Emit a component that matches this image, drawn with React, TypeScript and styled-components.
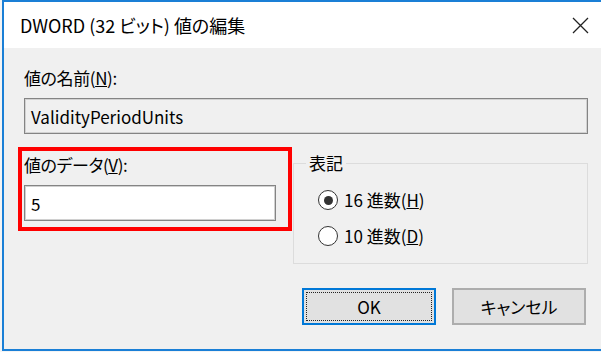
import React from "react";
import styled, { createGlobalStyle } from "styled-components";

const GlobalStyle = createGlobalStyle`
  html, body { margin: 0; padding: 0; background: #f4f4f4; }
  body {
    font-family: "Noto Sans CJK JP", "Noto Sans", sans-serif;
    font-feature-settings: "palt";
    color: #000;
  }
  * { box-sizing: border-box; }
`;

const Frame = styled.div`
  width: 599px;
  height: 351px;
  margin-left: 2px;
  border: 0 solid #1a7fd6;
  border-top-width: 2px;
  border-left-width: 2px;
  border-bottom-width: 2px;
  display: flex;
  flex-direction: column;
  overflow: hidden;
`;

const TitleBar = styled.div`
  flex: none;
  height: 46px;
  background: #fff;
  display: flex;
  align-items: center;
  padding: 0 12px 0 16px;
`;

const Title = styled.div`
  flex: 1;
  font-size: 18px;
  line-height: 26px;
`;

const CloseIcon = styled.svg`
  width: 17px;
  height: 17px;
  display: block;
`;

const Body = styled.div`
  flex: 1;
  background: #f0f0f0;
  padding: 18px 13px 0 20px;
  display: flex;
  flex-direction: column;
`;

const Label = styled.div`
  font-size: 17px;
  line-height: 24px;
  height: 24px;
  margin-bottom: 8px;
  letter-spacing: -0.4px;
`;

const TextBox = styled.div<{ $readOnly?: boolean }>`
  height: 36px;
  border: 1px solid #848484;
  box-shadow: inset 0 0 0 1px ${(p) => (p.$readOnly ? "#d2d2d2" : "#d0d0d0")};
  background: ${(p) => (p.$readOnly ? "#f0f0f0" : "#fff")};
  display: flex;
  align-items: center;
  padding-left: 6px;
  font-size: 17px;
`;

const Row = styled.div`
  display: flex;
  align-items: flex-start;
  gap: 17px;
  margin-top: 19px;
`;

const DataColumn = styled.div`
  position: relative;
  width: 252px;
  flex: none;
  &::after {
    content: "";
    position: absolute;
    left: -6px;
    right: -16px;
    top: -6px;
    bottom: -10px;
    border: 4px solid #ff0000;
    pointer-events: none;
  }
`;

const Group = styled.fieldset`
  flex: 1;
  margin: 0;
  margin-top: -1px;
  height: 112px;
  border: 1px solid #dcdcdc;
  padding: 14px 0 0 24px;
  display: flex;
  flex-direction: column;
  gap: 12px;
`;

const Legend = styled.legend`
  font-size: 17px;
  line-height: 22px;
  padding: 0 3px;
  margin-left: -12px;
`;

const RadioRow = styled.label`
  display: flex;
  align-items: center;
  gap: 6px;
  font-size: 17px;
  line-height: 24px;
`;

const RadioText = styled.span`
  white-space: nowrap;
`;

const RadioCircle = styled.span<{ $checked?: boolean }>`
  flex: none;
  width: 20px;
  height: 20px;
  border-radius: 50%;
  border: 1.5px solid #333;
  background: #fff;
  display: flex;
  align-items: center;
  justify-content: center;
  &::after {
    content: "";
    width: 9px;
    height: 9px;
    border-radius: 50%;
    background: #333;
    display: ${(p) => (p.$checked ? "block" : "none")};
  }
`;

const ButtonBar = styled.div`
  display: flex;
  justify-content: flex-end;
  gap: 16px;
  margin-top: 24px;
  padding-right: 2px;
`;

const Button = styled.button<{ $default?: boolean }>`
  width: 134px;
  height: 37px;
  background: #e1e1e1;
  border: 2px solid ${(p) => (p.$default ? "#0078d7" : "#adadad")};
  font-family: inherit;
  font-feature-settings: "palt";
  font-size: 17px;
  color: #000;
  padding: 0;
  outline: ${(p) => (p.$default ? "1px dotted #222" : "none")};
  outline-offset: -5px;
`;

export default function App() {
  return (
    <>
      <GlobalStyle />
      <Frame>
        <TitleBar>
          <Title>DWORD (32 ビット) 値の編集</Title>
          <CloseIcon viewBox="0 0 17 17">
            <path d="M1 1 L16 16 M16 1 L1 16" stroke="#222" strokeWidth="1.3" fill="none" />
          </CloseIcon>
        </TitleBar>
        <Body>
          <Label>
            値の名前(<u>N</u>):
          </Label>
          <TextBox $readOnly>ValidityPeriodUnits</TextBox>
          <Row>
            <DataColumn>
              <Label>
                値のデータ(<u>V</u>):
              </Label>
              <TextBox>5</TextBox>
            </DataColumn>
            <Group>
              <Legend>表記</Legend>
              <RadioRow>
                <RadioCircle $checked />
                <RadioText>
                  16 進数(<u>H</u>)
                </RadioText>
              </RadioRow>
              <RadioRow>
                <RadioCircle />
                <RadioText>
                  10 進数(<u>D</u>)
                </RadioText>
              </RadioRow>
            </Group>
          </Row>
          <ButtonBar>
            <Button $default>OK</Button>
            <Button>キャンセル</Button>
          </ButtonBar>
        </Body>
      </Frame>
    </>
  );
}
